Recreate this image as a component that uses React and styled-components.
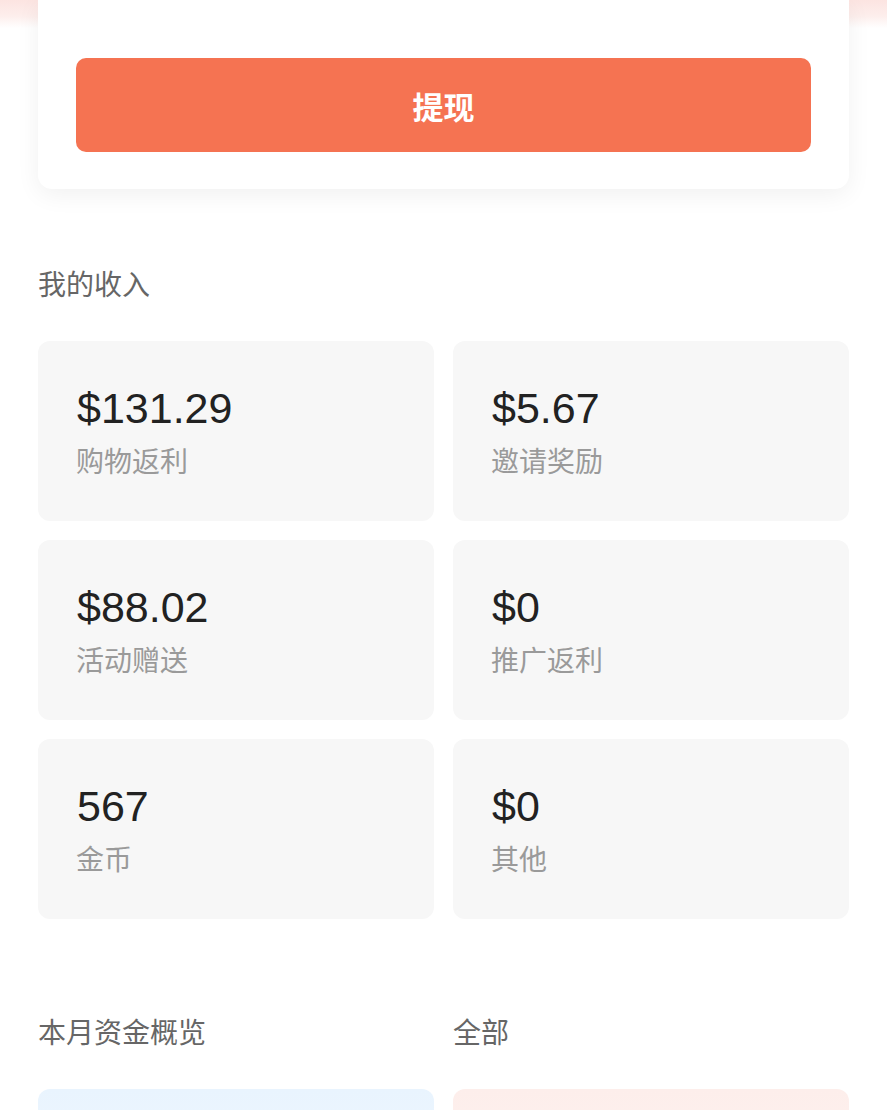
import styled, { createGlobalStyle } from "styled-components";

const GlobalStyle = createGlobalStyle`
  body {
    margin: 0;
    background: linear-gradient(180deg, #fce4e1 0px, #fdeeec 16px, #ffffff 28px) no-repeat;
    font-family: "Liberation Sans", "Noto Sans CJK SC", sans-serif;
  }
`;

const Page = styled.div`
  width: 887px;
  padding: 0 38px 40px;
  box-sizing: border-box;
`;

const WithdrawCard = styled.div`
  background: #fff;
  border-radius: 0 0 14px 14px;
  box-shadow: 0 6px 24px rgba(0, 0, 0, 0.06);
  padding: 58px 38px 37px;
`;

const WithdrawButton = styled.button`
  display: block;
  width: 100%;
  height: 94px;
  border: none;
  border-radius: 10px;
  background: #f57352;
  color: #fff;
  font-family: "Noto Sans CJK SC", sans-serif;
  font-size: 31px;
  font-weight: 700;
  cursor: pointer;
`;

const Heading = styled.div`
  margin-top: ${(p) => p.$top}px;
  font-family: "Noto Sans CJK SC", sans-serif;
  font-size: 28px;
  line-height: 40px;
  color: #666;
`;

const HeadRow = styled.div`
  display: grid;
  grid-template-columns: 1fr 1fr;
  column-gap: 19px;
  margin-top: 92px;
`;

const Grid = styled.div`
  display: grid;
  grid-template-columns: 1fr 1fr;
  gap: 19px;
  margin-top: 38px;
`;

const Tile = styled.div`
  height: 180px;
  box-sizing: border-box;
  padding: 42px 38px 0;
  border-radius: 12px;
  background: #f7f7f7;
`;

const Value = styled.div`
  padding-left: 1px;
  font-size: 43px;
  line-height: 50px;
  color: #222;
`;

const Label = styled.div`
  margin-top: 7px;
  font-family: "Noto Sans CJK SC", sans-serif;
  font-size: 28px;
  line-height: 40px;
  color: #9a9a9a;
`;

const OverviewCard = styled.div`
  height: 180px;
  border-radius: 12px;
  background: ${(p) => p.$bg};
`;

const income = [
  { value: "$131.29", label: "购物返利" },
  { value: "$5.67", label: "邀请奖励" },
  { value: "$88.02", label: "活动赠送" },
  { value: "$0", label: "推广返利" },
  { value: "567", label: "金币" },
  { value: "$0", label: "其他" },
];

const App = () => {
  return (
    <Page>
      <GlobalStyle />
      <WithdrawCard>
        <WithdrawButton>提现</WithdrawButton>
      </WithdrawCard>

      <Heading $top={74}>我的收入</Heading>
      <Grid>
        {income.map((item, i) => (
          <Tile key={i}>
            <Value>{item.value}</Value>
            <Label>{item.label}</Label>
          </Tile>
        ))}
      </Grid>

      <HeadRow>
        <Heading $top={0}>本月资金概览</Heading>
        <Heading $top={0}>全部</Heading>
      </HeadRow>
      <Grid>
        <OverviewCard $bg="linear-gradient(180deg, #e9f4fe, #f3f9ff)" />
        <OverviewCard $bg="linear-gradient(180deg, #fdeeeb, #fff6f4)" />
      </Grid>
    </Page>
  );
};

export default App;
